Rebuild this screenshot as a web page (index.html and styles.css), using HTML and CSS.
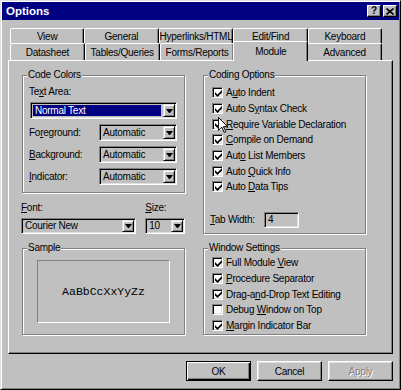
FILE: index.html
```html
<!DOCTYPE html>
<html lang="en">
<head>
    <meta charset="UTF-8">
    <title>Options</title>
    <link rel="stylesheet" href="styles.css">
</head>
<body>
    <div class="window">
        <div class="titlebar">
            <span class="title">Options</span>
            <div class="title-btns">
                <span class="tbtn">?</span>
                <span class="tbtn">
                    <svg width="8" height="7" viewBox="0 0 8 7"><path d="M0.5 0.5L7.5 6.5M7.5 0.5L0.5 6.5" stroke="#000" stroke-width="1.6"/></svg>
                </span>
            </div>
        </div>

        <div class="tabs">
            <div class="tab-row back">
                <div class="tab">View</div>
                <div class="tab">General</div>
                <div class="tab">Hyperlinks/HTML</div>
                <div class="tab">Edit/Find</div>
                <div class="tab">Keyboard</div>
            </div>
            <div class="tab-row front">
                <div class="tab">Datasheet</div>
                <div class="tab">Tables/Queries</div>
                <div class="tab">Forms/Reports</div>
                <div class="tab active">Module</div>
                <div class="tab">Advanced</div>
            </div>
        </div>

        <div class="panel">
            <div class="col">
                <fieldset class="group code-colors">
                    <legend>Code Colors</legend>
                    <div class="gbody">
                        <div class="lbl">Te<u>x</u>t Area:</div>
                        <div class="combo wide">
                            <div class="ctext sel">Normal Text</div>
                            <div class="drop"></div>
                        </div>
                        <div class="crow">
                            <span class="clbl">Fo<u>r</u>eground:</span>
                            <div class="combo short">
                                <div class="ctext">Automatic</div>
                                <div class="drop"></div>
                            </div>
                        </div>
                        <div class="crow">
                            <span class="clbl"><u>B</u>ackground:</span>
                            <div class="combo short">
                                <div class="ctext">Automatic</div>
                                <div class="drop"></div>
                            </div>
                        </div>
                        <div class="crow">
                            <span class="clbl"><u>I</u>ndicator:</span>
                            <div class="combo short">
                                <div class="ctext">Automatic</div>
                                <div class="drop"></div>
                            </div>
                        </div>
                    </div>
                </fieldset>

                <div class="font-row">
                    <div class="field font-field">
                        <div class="lbl"><u>F</u>ont:</div>
                        <div class="combo small">
                            <div class="ctext">Courier New</div>
                            <div class="drop"></div>
                        </div>
                    </div>
                    <div class="field size-field">
                        <div class="lbl"><u>S</u>ize:</div>
                        <div class="combo small">
                            <div class="ctext">10</div>
                            <div class="drop"></div>
                        </div>
                    </div>
                </div>

                <fieldset class="group sample">
                    <legend>Sample</legend>
                    <div class="gbody">
                        <div class="sample-box">AaBbCcXxYyZz</div>
                    </div>
                </fieldset>
            </div>

            <div class="col">
                <fieldset class="group coding">
                    <legend>Coding Options</legend>
                    <div class="gbody">
                        <div class="chk-row"><span class="box"><svg class="ck" width="7" height="7" viewBox="0 0 7 7"><path d="M0 2L2.5 4.5L7 0V2.5L2.5 7L0 4.5Z"/></svg></span><span>A<u>u</u>to Indent</span></div>
                        <div class="chk-row"><span class="box"><svg class="ck" width="7" height="7" viewBox="0 0 7 7"><path d="M0 2L2.5 4.5L7 0V2.5L2.5 7L0 4.5Z"/></svg></span><span>Auto S<u>y</u>ntax Check</span></div>
                        <div class="chk-row"><span class="box"><svg class="ck" width="7" height="7" viewBox="0 0 7 7"><path d="M0 2L2.5 4.5L7 0V2.5L2.5 7L0 4.5Z"/></svg></span><span><u>R</u>equire Variable Declaration</span></div>
                        <div class="chk-row"><span class="box"><svg class="ck" width="7" height="7" viewBox="0 0 7 7"><path d="M0 2L2.5 4.5L7 0V2.5L2.5 7L0 4.5Z"/></svg></span><span><u>C</u>ompile on Demand</span></div>
                        <div class="chk-row"><span class="box"><svg class="ck" width="7" height="7" viewBox="0 0 7 7"><path d="M0 2L2.5 4.5L7 0V2.5L2.5 7L0 4.5Z"/></svg></span><span>Aut<u>o</u> List Members</span></div>
                        <div class="chk-row"><span class="box"><svg class="ck" width="7" height="7" viewBox="0 0 7 7"><path d="M0 2L2.5 4.5L7 0V2.5L2.5 7L0 4.5Z"/></svg></span><span>Auto <u>Q</u>uick Info</span></div>
                        <div class="chk-row"><span class="box"><svg class="ck" width="7" height="7" viewBox="0 0 7 7"><path d="M0 2L2.5 4.5L7 0V2.5L2.5 7L0 4.5Z"/></svg></span><span>Auto <u>D</u>ata Tips</span></div>
                        <div class="tabwidth-row">
                            <span class="tw-lbl"><u>T</u>ab Width:</span>
                            <div class="input">4</div>
                        </div>
                    </div>
                </fieldset>

                <fieldset class="group window-settings">
                    <legend>Window Settings</legend>
                    <div class="gbody">
                        <div class="chk-row"><span class="box"><svg class="ck" width="7" height="7" viewBox="0 0 7 7"><path d="M0 2L2.5 4.5L7 0V2.5L2.5 7L0 4.5Z"/></svg></span><span>Full Module <u>V</u>iew</span></div>
                        <div class="chk-row"><span class="box"><svg class="ck" width="7" height="7" viewBox="0 0 7 7"><path d="M0 2L2.5 4.5L7 0V2.5L2.5 7L0 4.5Z"/></svg></span><span><u>P</u>rocedure Separator</span></div>
                        <div class="chk-row"><span class="box"><svg class="ck" width="7" height="7" viewBox="0 0 7 7"><path d="M0 2L2.5 4.5L7 0V2.5L2.5 7L0 4.5Z"/></svg></span><span>Drag-a<u>n</u>d-Drop Text Editing</span></div>
                        <div class="chk-row"><span class="box"></span><span>Debug <u>W</u>indow on Top</span></div>
                        <div class="chk-row"><span class="box"><svg class="ck" width="7" height="7" viewBox="0 0 7 7"><path d="M0 2L2.5 4.5L7 0V2.5L2.5 7L0 4.5Z"/></svg></span><span><u>M</u>argin Indicator Bar</span></div>
                    </div>
                </fieldset>
            </div>
        </div>

        <div class="buttons">
            <div class="btn default">OK</div>
            <div class="btn">Cancel</div>
            <div class="btn disabled">Apply</div>
        </div>

        <!-- mouse pointer over the checkbox list -->
        <svg class="cursor" width="10" height="16" viewBox="0 0 12 19"><path d="M0.5 0.5V16L4.5 12L7.5 18.5L9.5 17.5L6.5 11.5H11.5Z" fill="#fff" stroke="#000" stroke-width="1.2"/></svg>
    </div>
</body>
</html>
```

FILE: styles.css
```css
* {
    box-sizing: border-box;
}
html, body {
    margin: 0;
    padding: 0;
}
body {
    width: 401px;
    height: 390px;
    overflow: hidden;
    background: #c0c0c0;
    color: #000;
    font-family: "Liberation Sans", Arial, sans-serif;
    font-size: 10px;
    letter-spacing: -0.25px;
}
.window {
    position: relative;
    width: 401px;
    height: 390px;
    padding: 1px;
    border: 1px solid;
    border-color: #dfdfdf #000 #000 #dfdfdf;
    box-shadow: inset 1px 1px 0 #fff, inset -1px -1px 0 #808080;
    display: flex;
    flex-direction: column;
}
.titlebar {
    height: 18px;
    background: #000080;
    display: flex;
    align-items: center;
    justify-content: space-between;
    padding: 0 2px 0 4px;
}
.title {
    color: #fff;
    font-weight: 700;
    font-size: 11.5px;
    letter-spacing: 0;
}
.title-btns {
    display: flex;
    gap: 2px;
}
.tbtn {
    width: 14px;
    height: 12px;
    background: #c0c0c0;
    border: 1px solid;
    border-color: #fff #000 #000 #fff;
    box-shadow: inset -1px -1px 0 #808080;
    display: flex;
    align-items: center;
    justify-content: center;
    font-weight: 700;
    font-size: 10px;
    line-height: 1;
}

/* tabs */
.tabs {
    margin: 8px 0 0 8px;
    width: 372px;
}
.tab-row {
    display: flex;
}
.tab-row.back {
    height: 15px;
}
.tab-row.front {
    height: 17px;
    position: relative;
    z-index: 1;
}
.tab {
    flex: 1;
    display: flex;
    align-items: center;
    justify-content: center;
    white-space: nowrap;
    background: #c0c0c0;
    border: 1px solid;
    border-bottom: none;
    border-color: #fff #000 transparent #fff;
    border-radius: 2px 2px 0 0;
    box-shadow: inset -1px 0 0 #808080;
}
.tab.active {
    position: relative;
    z-index: 2;
    margin: -2px -1px -1px;
    padding-bottom: 1px;
}

/* panel */
.panel {
    margin-left: 6px;
    width: 385px;
    height: 294px;
    border: 1px solid;
    border-color: #fff #000 #000 #fff;
    box-shadow: inset -1px -1px 0 #808080;
    display: flex;
    gap: 18px;
    padding: 8px 0 0 13px;
}
.col {
    width: 163px;
    display: flex;
    flex-direction: column;
}
.group {
    margin: 0;
    padding: 0;
    min-width: 0;
    border: 1px solid #808080;
    box-shadow: inset 1px 1px 0 #fff, 1px 1px 0 #fff;
}
.group legend {
    margin-left: 4px;
    padding: 0 1px;
    line-height: 12px;
    background: #c0c0c0;
}
.lbl {
    line-height: 12px;
    white-space: nowrap;
}

/* code colors */
.code-colors {
    height: 124px;
}
.code-colors .gbody {
    padding: 5px 7px 0 6px;
}
.crow {
    display: flex;
    align-items: center;
    margin-top: 5px;
}
.clbl {
    width: 70px;
    white-space: nowrap;
}
.combo {
    display: flex;
    height: 17px;
    padding: 1px;
    border: 1px solid;
    border-color: #808080 #fff #fff #808080;
    box-shadow: inset 1px 1px 0 #000, inset -1px -1px 0 #dfdfdf;
    background: #c0c0c0;
}
.combo.wide {
    width: 147px;
    margin: 4px 0 0 1px;
}
.combo.short {
    width: 78px;
}
.combo.small {
    height: 16px;
    margin-top: 4px;
}
.ctext {
    flex: 1;
    padding-left: 2px;
    line-height: 13px;
    white-space: nowrap;
    overflow: hidden;
}
.combo.small .ctext {
    line-height: 12px;
}
.ctext.sel {
    background: #000080;
    color: #fff;
    margin: 1px 2px 1px 1px;
    line-height: 11px;
}
.drop {
    width: 12px;
    height: 100%;
    background: #c0c0c0;
    border: 1px solid;
    border-color: #dfdfdf #000 #000 #dfdfdf;
    box-shadow: inset 1px 1px 0 #fff, inset -1px -1px 0 #808080;
    display: flex;
    align-items: center;
    justify-content: center;
}
.drop::after {
    content: "";
    width: 1px;
    border-top: 4px solid #000;
    border-left: 3px solid transparent;
    border-right: 3px solid transparent;
}

/* font row */
.font-row {
    display: flex;
    margin: 9px 0 0 -1px;
}
.font-field {
    width: 116px;
}
.size-field {
    width: 40px;
    margin-left: 9px;
}

/* sample */
.sample {
    height: 93px;
    margin-top: 8px;
}
.sample .gbody {
    padding: 6px 14px 0 14px;
}
.sample-box {
    height: 63px;
    border: 1px solid;
    border-color: #808080 #fff #fff #808080;
    display: flex;
    align-items: center;
    justify-content: center;
    font-family: "Liberation Mono", "Courier New", monospace;
    font-size: 11.5px;
    letter-spacing: 0;
}

/* check boxes */
.coding {
    height: 165px;
}
.coding .gbody {
    padding: 4px 6px 0 8px;
}
.window-settings {
    height: 93px;
    margin-top: 8px;
}
.window-settings .gbody {
    padding: 1px 6px 0 8px;
}
.chk-row {
    display: flex;
    align-items: center;
    gap: 3px;
    height: 15.7px;
    white-space: nowrap;
}
.box {
    width: 11px;
    height: 11px;
    flex: none;
    background: #fff;
    border: 1px solid;
    border-color: #808080 #fff #fff #808080;
    box-shadow: inset 1px 1px 0 #000, inset -1px -1px 0 #dfdfdf;
    display: flex;
    align-items: center;
    justify-content: center;
}
.ck {
    display: block;
    margin: 1px 0 0 1px;
}
.tabwidth-row {
    display: flex;
    align-items: center;
    margin: 17px 0 0 -2px;
}
.tw-lbl {
    width: 54px;
    white-space: nowrap;
}
.input {
    width: 35px;
    height: 16px;
    padding-left: 3px;
    line-height: 14px;
    border: 1px solid;
    border-color: #808080 #fff #fff #808080;
    box-shadow: inset 1px 1px 0 #000, inset -1px -1px 0 #dfdfdf;
}

/* buttons */
.buttons {
    display: flex;
    justify-content: flex-end;
    gap: 6px;
    margin-top: 7px;
    padding-right: 6px;
}
.btn {
    width: 65px;
    height: 20px;
    display: flex;
    align-items: center;
    justify-content: center;
    border: 1px solid;
    border-color: #fff #000 #000 #fff;
    box-shadow: inset -1px -1px 0 #808080, inset 1px 1px 0 #dfdfdf;
}
.btn.default {
    border-color: #000;
    box-shadow: inset 1px 1px 0 #fff, inset -1px -1px 0 #000, inset -2px -2px 0 #808080;
}
.btn.disabled {
    color: #808080;
    text-shadow: 1px 1px 0 #fff;
}
.cursor {
    position: absolute;
    left: 217px;
    top: 116px;
}
```
